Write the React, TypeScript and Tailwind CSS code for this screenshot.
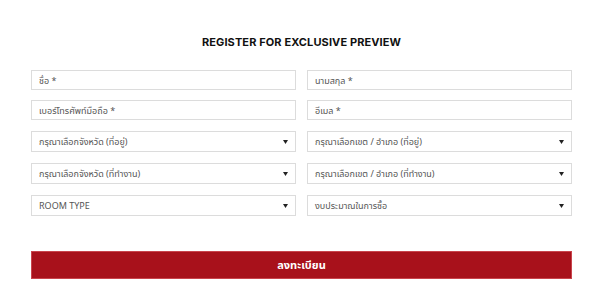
import React from "react";

const inputs = [
  ["ชื่อ *", "นามสกุล *"],
  ["เบอร์โทรศัพท์มือถือ *", "อีเมล *"],
];

const selects = [
  ["กรุณาเลือกจังหวัด (ที่อยู่)", "กรุณาเลือกเขต / อำเภอ (ที่อยู่)"],
  ["กรุณาเลือกจังหวัด (ที่ทำงาน)", "กรุณาเลือกเขต / อำเภอ (ที่ทำงาน)"],
  ["ROOM TYPE", "งบประมาณในการซื้อ"],
];

const font = { fontFamily: '"Noto Sans", "Noto Sans Thai", "DejaVu Sans", sans-serif' };

const Field: React.FC<{ label: string; select?: boolean }> = ({ label, select }) => (
  <div
    className={`flex items-center justify-between border border-[#dcdcdc] bg-white pl-[7px] pr-[6px] text-[9px] text-[#555] ${
      select ? "h-[21px]" : "h-[20px]"
    }`}
  >
    <span className="leading-none">{label}</span>
    {select && (
      <svg width="5" height="4" viewBox="0 0 5 4" className="mr-[1px]">
        <path d="M0 0h5L2.5 4z" fill="#222" />
      </svg>
    )}
  </div>
);

export default function App() {
  return (
    <div className="w-[600px] h-[295px] bg-white pl-[31px] pt-[35px]" style={font}>
      <h1
        className="w-[541px] text-center text-[11px] font-bold tracking-[0.01em] text-[#111] leading-[14px]"
        style={{ fontFamily: 'Inter, "Liberation Sans", sans-serif' }}
      >
        REGISTER FOR EXCLUSIVE PREVIEW
      </h1>
      <div className="mt-[21px] w-[541px] grid grid-cols-2 gap-x-[11px] gap-y-[10px]">
        {inputs.flat().map((l) => (
          <Field key={l} label={l} />
        ))}
      </div>
      <div className="mt-[11px] w-[541px] grid grid-cols-2 gap-x-[11px] gap-y-[11px]">
        {selects.flat().map((l) => (
          <Field key={l} label={l} select />
        ))}
      </div>
      <button className="mt-[35px] w-[541px] h-[28px] bg-[#a8111b] border border-[#c9444c] text-white text-[11px] font-bold">
        ลงทะเบียน
      </button>
    </div>
  );
}
